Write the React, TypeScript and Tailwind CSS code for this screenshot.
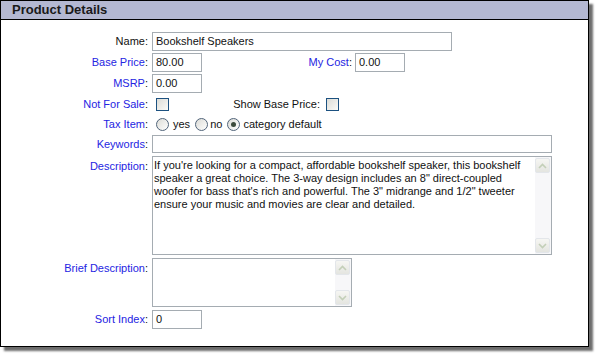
const blue = 'text-[#2424e2]';

function Label({ text, color = 'blue', className = '' }: { text: string; color?: 'blue' | 'black'; className?: string }) {
  return (
    <span className={`whitespace-nowrap ${className}`}>
      <span className={color === 'blue' ? blue : 'text-[#111]'}>{text}</span>
      <span className="text-[#111]">:</span>
    </span>
  );
}

function TextBox({ value, width, height = 'h-[19px]' }: { value?: string; width: string; height?: string }) {
  return (
    <div className={`${width} ${height} flex items-center border border-[#a5acb2] bg-white pl-[3px] text-[#111]`}>
      {value}
    </div>
  );
}

function CheckBox() {
  return (
    <span className="block h-[13px] w-[13px] border border-[#1c5180] bg-gradient-to-br from-[#dcdcd7] to-[#fbfbf8]" />
  );
}

function Radio({ checked = false }: { checked?: boolean }) {
  return (
    <span className="flex h-[13px] w-[13px] items-center justify-center rounded-full border border-[#51647a] bg-gradient-to-br from-[#dcdcd7] to-[#ffffff]">
      {checked ? <span className="block h-[5px] w-[5px] rounded-full bg-[#3b4a3b]" /> : null}
    </span>
  );
}

function ScrollButton({ dir }: { dir: 'up' | 'down' }) {
  return (
    <div className="flex h-[15px] w-[15px] items-center justify-center rounded-[2px] border border-[#e3e6ea] bg-gradient-to-b from-[#f6f6f3] to-[#e4e5e0]">
      <svg width="9" height="6" viewBox="0 0 9 6">
        <path
          d={dir === 'up' ? 'M1 5 L4.5 1.5 L8 5' : 'M1 1 L4.5 4.5 L8 1'}
          fill="none"
          stroke="#c3cfb8"
          strokeWidth="1.6"
        />
      </svg>
    </div>
  );
}

function TextArea({ width, height, lines }: { width: string; height: string; lines?: string[] }) {
  return (
    <div className={`${width} ${height} flex border border-[#a5acb2] bg-white`}>
      <div className="flex-1 pl-[1px] pt-[2px] leading-[13px] text-[#111]">
        {lines?.map((line) => (
          <div key={line} className="whitespace-nowrap">{line}</div>
        ))}
      </div>
      <div className="flex w-[16px] flex-col justify-between bg-[#f7f7f9] py-[1px]">
        <ScrollButton dir="up" />
        <ScrollButton dir="down" />
      </div>
    </div>
  );
}

function Row({ label, children, className = '', top = false }: { label: React.ReactNode; children: React.ReactNode; className?: string; top?: boolean }) {
  return (
    <div className={`flex ${top ? 'items-start' : 'items-center'} ${className}`}>
      <div className={`w-[147px] shrink-0 text-right ${top ? 'pt-[2px]' : ''}`}>{label}</div>
      <div className="ml-[4px] flex items-center">{children}</div>
    </div>
  );
}

export default function App() {
  const description = [
    "If you're looking for a compact, affordable bookshelf speaker, this bookshelf",
    'speaker a great choice. The 3-way design includes an 8" direct-coupled',
    'woofer for bass that\'s rich and powerful. The 3" midrange and 1/2" tweeter',
    'ensure your music and movies are clear and detailed.',
  ];

  return (
    <div className="h-[355px] w-[598px] bg-white font-['Liberation_Sans',Arial,sans-serif] text-[11px]">
      <div className="w-[589px] border border-black bg-white pb-[17px] shadow-[4px_4px_2px_rgba(60,60,60,0.75)]">
        <div className="flex h-[19px] items-center border-b border-black bg-[#b4b8d2] pl-[11px] text-[13px] font-bold text-[#1a1a1a]">
          Product Details
        </div>

        <Row label={<Label text="Name" color="black" />} className="mt-[12px] h-[19px]">
          <TextBox value="Bookshelf Speakers" width="w-[300px]" />
        </Row>

        <Row label={<Label text="Base Price" />} className="mt-[2px] h-[19px]">
          <TextBox value="80.00" width="w-[50px]" />
          <div className="w-[150px] text-right">
            <Label text="My Cost" />
          </div>
          <div className="ml-[3px]">
            <TextBox value="0.00" width="w-[50px]" />
          </div>
        </Row>

        <Row label={<Label text="MSRP" />} className="mt-[2px] h-[19px]">
          <TextBox value="0.00" width="w-[50px]" />
        </Row>

        <Row label={<Label text="Not For Sale" />} className="mt-[2px] h-[19px]">
          <div className="w-[50px] pl-[4px]">
            <CheckBox />
          </div>
          <div className="w-[118px] text-right">
            <Label text="Show Base Price" color="black" />
          </div>
          <div className="ml-[6px]">
            <CheckBox />
          </div>
        </Row>

        <Row label={<Label text="Tax Item" />} className="mt-[2px] h-[17px]">
          <div className="flex items-center pl-[4px] text-[#111]">
            <Radio />
            <span className="ml-[4px] mr-[5px]">yes</span>
            <Radio />
            <span className="ml-[2px] mr-[5px]">no</span>
            <Radio checked />
            <span className="ml-[3px]">category default</span>
          </div>
        </Row>

        <Row label={<Label text="Keywords" />} className="mt-[2px] h-[18px]">
          <TextBox width="w-[400px]" height="h-[18px]" />
        </Row>

        <Row label={<Label text="Description" />} className="mt-[3px]" top>
          <TextArea width="w-[400px]" height="h-[99px]" lines={description} />
        </Row>

        <Row label={<Label text="Brief Description" />} className="mt-[3px]" top>
          <TextArea width="w-[200px]" height="h-[49px]" />
        </Row>

        <Row label={<Label text="Sort Index" />} className="mt-[3px] h-[19px]">
          <TextBox value="0" width="w-[50px]" />
        </Row>
      </div>
    </div>
  );
}
